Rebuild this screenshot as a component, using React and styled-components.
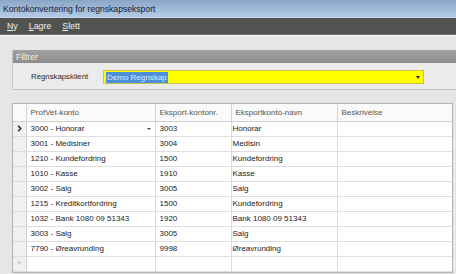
import React from "react";
import styled, { createGlobalStyle } from "styled-components";

const Global = createGlobalStyle`
  html, body { margin: 0; padding: 0; background: #e6e6e6; }
  body { width: 456px; height: 274px; overflow: hidden; font-family: "Liberation Sans", Arial, sans-serif; }
  * { box-sizing: border-box; }
`;

const Window = styled.div`
  width: 456px;
  height: 274px;
  display: flex;
  flex-direction: column;
  background: #e6e6e6;
  overflow: hidden;
`;

const TitleBar = styled.div`
  height: 18px;
  flex: none;
  background: linear-gradient(#8aa5c6, #b4cce7);
  border-bottom: 1px solid #c6d7ea;
  color: #18202e;
  font-size: 8.6px;
  display: flex;
  align-items: center;
  padding-left: 3px;
`;

const MenuBar = styled.div`
  height: 17px;
  flex: none;
  background: #515351;
  border-bottom: 1px solid #6a6b6a;
  display: flex;
  align-items: center;
  gap: 11px;
  padding-left: 7px;
`;

const MenuItem = styled.span`
  color: #f0f0f0;
  font-size: 8.8px;
  u { text-decoration: underline; text-underline-offset: 1px; }
`;

const Content = styled.div`
  flex: 1;
  display: flex;
  flex-direction: column;
  padding: 14px 0 0 12px;
  gap: 13px;
  border-top: 1px solid #f4f4f4;
`;

const Panel = styled.div`
  display: flex;
  flex-direction: column;
  border-left: 1px solid #c8c8c8;
  border-bottom: 1px solid #c4c4c4;
  background: #ebebeb;
`;

const PanelHeader = styled.div`
  height: 13px;
  background: linear-gradient(#a2a2a2, #8c8c8c);
  color: #f2f2f2;
  font-size: 8.5px;
  display: flex;
  align-items: center;
  padding-left: 3px;
`;

const PanelBody = styled.div`
  height: 26px;
  display: flex;
  align-items: center;
  padding-left: 18px;
  gap: 15px;
`;

const Label = styled.span`
  font-size: 7.8px;
  color: #2a2a2a;
  width: 57px;
  white-space: nowrap;
`;

const Combo = styled.div`
  width: 321px;
  height: 14px;
  background: #ffff00;
  border: 1px solid #c9c74a;
  display: flex;
  align-items: center;
  justify-content: space-between;
  padding: 0 3px 0 2px;
  margin-top: 2px;
`;

const Selected = styled.span`
  background: #4a8fd8;
  color: #dbeeff;
  font-size: 8px;
  line-height: 11px;
  padding: 0 1px;
`;

const Arrow = styled.span`
  width: 0;
  height: 0;
  border-left: 2px solid transparent;
  border-right: 2px solid transparent;
  border-top: 3px solid #222;
`;

const GridBox = styled.div`
  width: 441px;
  height: 170px;
  background: #fff;
  border: 1px solid #b4b4b4;
  overflow: hidden;
`;

const Table = styled.table`
  border-collapse: collapse;
  table-layout: fixed;
  width: 439px;
  font-size: 8px;
  color: #222;
`;

const HeadCell = styled.th`
  height: 17px;
  font-weight: normal;
  text-align: left;
  color: #555;
  background: #fafafa;
  border-right: 1px solid #d4d4d4;
  border-bottom: 1px solid #cfcfcf;
  padding: 0 0 0 4px;
  white-space: nowrap;
  overflow: hidden;
`;

const Cell = styled.td`
  height: 15px;
  border-right: 1px solid #dadada;
  border-bottom: 1px solid #dedede;
  padding: 0 0 0 ${(p) => (p.$tight ? 1 : 4)}px;
  white-space: nowrap;
  overflow: hidden;
  position: relative;
`;

const Indicator = styled.td`
  height: 15px;
  background: #f0f0f0;
  border-right: 1px solid #cfcfcf;
  border-bottom: 1px solid #dcdcdc;
  text-align: center;
  padding: 0;
  font-size: 9px;
  line-height: 0;
  color: ${(p) => (p.$faint ? "#b8b8b8" : "#222")};
`;

const CellArrow = styled.span`
  position: absolute;
  right: 4px;
  top: 6px;
  width: 0;
  height: 0;
  border-left: 2px solid transparent;
  border-right: 2px solid transparent;
  border-top: 2px solid #444;
`;

const rows = [
  ["3000 - Honorar", "3003", "Honorar"],
  ["3001 - Medisiner", "3004", "Medisin"],
  ["1210 - Kundefordring", "1500", "Kundefordring"],
  ["1010 - Kasse", "1910", "Kasse"],
  ["3002 - Salg", "3005", "Salg"],
  ["1215 - Kreditkortfordring", "1500", "Kundefordring"],
  ["1032 - Bank 1080 09 51343", "1920", "Bank 1080 09 51343"],
  ["3003 - Salg", "3005", "Salg"],
  ["7790 - Øreavrunding", "9998", "Øreavrunding"],
];

const Chevron = () => (
  <svg width="5" height="7" viewBox="0 0 5 7">
    <path d="M1 0.8 L3.8 3.5 L1 6.2" fill="none" stroke="#222" strokeWidth="1.4" />
  </svg>
);

export default function App() {
  return (
    <Window>
      <Global />
      <TitleBar>Kontokonvertering for regnskapseksport</TitleBar>
      <MenuBar>
        <MenuItem><u>N</u>y</MenuItem>
        <MenuItem><u>L</u>agre</MenuItem>
        <MenuItem><u>S</u>lett</MenuItem>
      </MenuBar>
      <Content>
        <Panel>
          <PanelHeader>Filtrer</PanelHeader>
          <PanelBody>
            <Label>Regnskapsklient</Label>
            <Combo>
              <Selected>Demo Regnskap</Selected>
              <Arrow />
            </Combo>
          </PanelBody>
        </Panel>
        <GridBox>
          <Table>
            <colgroup>
              <col style={{ width: 13 }} />
              <col style={{ width: 129 }} />
              <col style={{ width: 76 }} />
              <col style={{ width: 106 }} />
              <col style={{ width: 115 }} />
            </colgroup>
            <thead>
              <tr>
                <HeadCell />
                <HeadCell>ProfVet-konto</HeadCell>
                <HeadCell>Eksport-kontonr.</HeadCell>
                <HeadCell>Eksportkonto-navn</HeadCell>
                <HeadCell>Beskrivelse</HeadCell>
              </tr>
            </thead>
            <tbody>
              {rows.map((r, i) => (
                <tr key={i}>
                  <Indicator>{i === 0 ? <Chevron /> : null}</Indicator>
                  <Cell>
                    {r[0]}
                    {i === 0 && <CellArrow />}
                  </Cell>
                  <Cell>{r[1]}</Cell>
                  <Cell $tight>{r[2]}</Cell>
                  <Cell />
                </tr>
              ))}
              <tr>
                <Indicator $faint>*</Indicator>
                <Cell />
                <Cell />
                <Cell />
                <Cell />
              </tr>
            </tbody>
          </Table>
        </GridBox>
      </Content>
    </Window>
  );
}
